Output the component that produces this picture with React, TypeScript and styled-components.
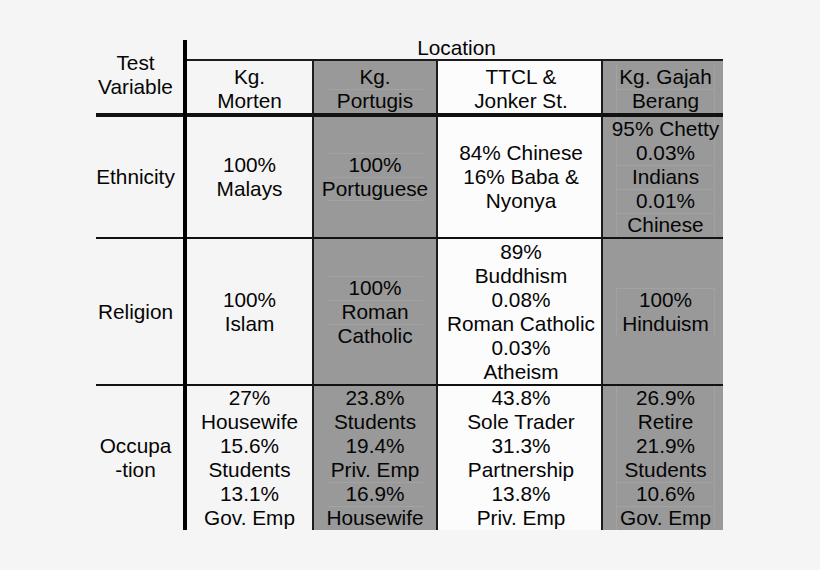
import React from "react";
import styled, { createGlobalStyle } from "styled-components";

const GlobalStyle = createGlobalStyle`
  html, body {
    margin: 0;
    padding: 0;
    background: #f5f5f5;
  }
  body {
    width: 820px;
    height: 570px;
    overflow: hidden;
    font-family: "Liberation Sans", Arial, sans-serif;
    color: #050505;
  }
`;

type Tone = "plain" | "gray" | "white";

interface Column {
  tone: Tone;
  header: string[];
  headerRules: number[];
  lane?: boolean;
}

interface BodyRow {
  label: string[];
  cells: { lines: string[]; rules: number[] }[];
}

// 列ごとの設定
const columns: Column[] = [
  { tone: "plain", header: ["Kg.", "Morten"], headerRules: [] },
  { tone: "gray", header: ["Kg.", "Portugis"], headerRules: [1] },
  { tone: "white", header: ["TTCL &", "Jonker St."], headerRules: [] },
  { tone: "gray", header: ["Kg. Gajah", "Berang"], headerRules: [1], lane: true },
];

const rows: BodyRow[] = [
  {
    label: ["Ethnicity"],
    cells: [
      { lines: ["100%", "Malays"], rules: [] },
      { lines: ["100%", "Portuguese"], rules: [0, 1, 2] },
      { lines: ["84% Chinese", "16% Baba &", "Nyonya"], rules: [] },
      { lines: ["95% Chetty", "0.03%", "Indians", "0.01%", "Chinese"], rules: [2, 3, 4] },
    ],
  },
  {
    label: ["Religion"],
    cells: [
      { lines: ["100%", "Islam"], rules: [] },
      { lines: ["100%", "Roman", "Catholic"], rules: [0, 1, 2] },
      {
        lines: ["89%", "Buddhism", "0.08%", "Roman Catholic", "0.03%", "Atheism"],
        rules: [],
      },
      { lines: ["100%", "Hinduism"], rules: [0] },
    ],
  },
  {
    label: ["Occupa", "-tion"],
    cells: [
      { lines: ["27%", "Housewife", "15.6%", "Students", "13.1%", "Gov. Emp"], rules: [] },
      { lines: ["23.8%", "Students", "19.4%", "Priv. Emp", "16.9%", "Housewife"], rules: [4, 5] },
      { lines: ["43.8%", "Sole Trader", "31.3%", "Partnership", "13.8%", "Priv. Emp"], rules: [] },
      { lines: ["26.9%", "Retire", "21.9%", "Students", "10.6%", "Gov. Emp"], rules: [4, 5] },
    ],
  },
];

const rowBorders = [4, 2, 2];

export default function App() {
  return (
    <>
      <GlobalStyle />
      <Page>
        <Table>
          <Corner>
            <TextLine>Test</TextLine>
            <TextLine>Variable</TextLine>
          </Corner>
          <Axis />
          <LocationCell>Location</LocationCell>

          {columns.map((col, c) => (
            <HeaderCell key={c} $tone={col.tone} $c={c}>
              <Lines col={col} lines={col.header} rules={col.headerRules} />
            </HeaderCell>
          ))}

          {rows.map((row, r) => (
            <React.Fragment key={r}>
              <LabelCell $r={r} $top={rowBorders[r]}>
                {row.label.map((t) => (
                  <TextLine key={t}>{t}</TextLine>
                ))}
              </LabelCell>
              {row.cells.map((cell, c) => (
                <DataCell key={c} $tone={columns[c].tone} $c={c} $r={r} $top={rowBorders[r]}>
                  <Lines col={columns[c]} lines={cell.lines} rules={cell.rules} />
                </DataCell>
              ))}
            </React.Fragment>
          ))}
        </Table>
      </Page>
    </>
  );
}

const Lines = ({ col, lines, rules }: { col: Column; lines: string[]; rules: number[] }) => {
  const body = lines.map((t, i) => (
    <TextLine
      key={i}
      $width={col.tone === "gray" ? (col.lane ? 99 : 95) : undefined}
      $ruleTop={rules.includes(i)}
      $ruleBottom={i === lines.length - 1 && rules.includes(lines.length)}
    >
      {t}
    </TextLine>
  ));
  return col.lane ? <Lane>{body}</Lane> : <>{body}</>;
};

const Page = styled.div`
  padding: 36px 0 0 96px;
`;

const Table = styled.div`
  display: grid;
  grid-template-columns: 87px 4px 125px 126px 163px 122px;
  grid-template-rows: 23px 54px 124px 147px 146px;
  font-size: 20.8px;
  line-height: 24px;
`;

const Corner = styled.div`
  grid-column: 1;
  grid-row: 1 / 3;
  display: flex;
  flex-direction: column;
  align-items: center;
  justify-content: center;
  padding-right: 8px;
`;

const Axis = styled.div`
  grid-column: 2;
  grid-row: 1 / 6;
  margin-top: 4px;
  background: #000;
`;

const LocationCell = styled.div`
  grid-column: 3 / 7;
  grid-row: 1;
  text-align: center;
  line-height: 23px;
  padding-left: 3px;
`;

const toneBg: Record<Tone, string> = {
  plain: "transparent",
  gray: "#999999",
  white: "#fcfcfc",
};

const CellBase = styled.div<{ $tone: Tone; $c: number }>`
  grid-column: ${(p) => p.$c + 3};
  box-sizing: border-box;
  display: flex;
  flex-direction: column;
  align-items: center;
  background: ${(p) => toneBg[p.$tone]};
  border-left: ${(p) => (p.$c === 1 || p.$c === 3 ? "2px solid #1c1c1c" : "none")};
  border-right: ${(p) => (p.$c === 1 ? "2px solid #1c1c1c" : "none")};
  padding-left: ${(p) => (p.$c === 2 ? "3px" : "0")};
`;

const HeaderCell = styled(CellBase)`
  grid-row: 2;
  border-top: 2px solid #1c1c1c;
  justify-content: flex-end;
`;

const DataCell = styled(CellBase)<{ $r: number; $top: number }>`
  grid-row: ${(p) => p.$r + 3};
  border-top: ${(p) => p.$top}px solid #111;
  justify-content: center;
`;

const LabelCell = styled.div<{ $r: number; $top: number }>`
  grid-column: 1;
  grid-row: ${(p) => p.$r + 3};
  border-top: ${(p) => p.$top}px solid #111;
  display: flex;
  flex-direction: column;
  align-items: center;
  justify-content: center;
  padding-right: 8px;
`;

const Lane = styled.div`
  width: 99px;
  align-self: flex-start;
  margin-left: 13px;
  box-shadow: inset 1px 0 0 #a2a2a2, inset -1px 0 0 #a2a2a2;
  display: flex;
  flex-direction: column;
`;

const TextLine = styled.div<{ $width?: number; $ruleTop?: boolean; $ruleBottom?: boolean }>`
  display: flex;
  justify-content: center;
  white-space: nowrap;
  width: ${(p) => (p.$width ? `${p.$width}px` : "auto")};
  box-shadow: ${(p) =>
    [p.$ruleTop && "inset 0 1px 0 #a2a2a2", p.$ruleBottom && "inset 0 -1px 0 #a2a2a2"]
      .filter(Boolean)
      .join(", ") || "none"};
`;
